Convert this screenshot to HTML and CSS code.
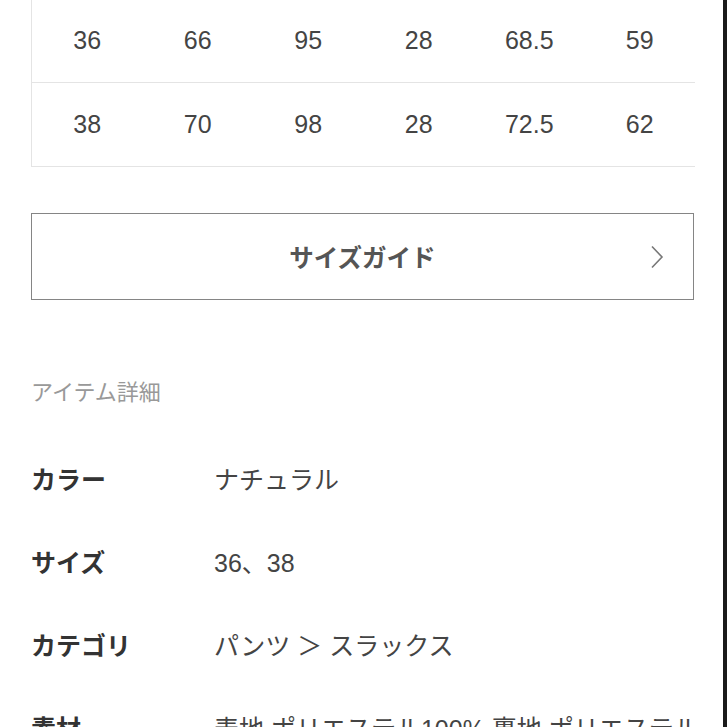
FILE: index.html
```html
<!DOCTYPE html>
<html lang="ja">
<head>
<meta charset="utf-8">
<title>アイテム詳細</title>
<link rel="stylesheet" href="styles.css">
</head>
<body>
<div class="page">
  <div class="content">
    <div class="size-table">
      <div class="size-row">
        <span>36</span><span>66</span><span>95</span><span>28</span><span>68.5</span><span>59</span>
      </div>
      <div class="size-row">
        <span>38</span><span>70</span><span>98</span><span>28</span><span>72.5</span><span>62</span>
      </div>
    </div>

    <a class="guide-btn" href="#">
      <span class="guide-label">サイズガイド</span>
      <svg class="chevron" width="14" height="24" viewBox="0 0 14 24" aria-hidden="true">
        <path d="M2 1.5 L12 12 L2 22.5" fill="none" stroke="#777" stroke-width="1.6"/>
      </svg>
    </a>

    <h2 class="section-title">アイテム詳細</h2>

    <dl class="details">
      <div class="detail-row"><dt>カラー</dt><dd>ナチュラル</dd></div>
      <div class="detail-row"><dt>サイズ</dt><dd>36、38</dd></div>
      <div class="detail-row"><dt>カテゴリ</dt><dd>パンツ ＞ スラックス</dd></div>
      <div class="detail-row"><dt>素材</dt><dd>表地 ポリエステル100% 裏地 ポリエステル100%</dd></div>
    </dl>
  </div>
  <div class="edge"></div>
</div>
</body>
</html>
```

FILE: styles.css
```css
* { box-sizing: border-box; }

html, body {
  margin: 0;
  padding: 0;
  background: #fff;
  overflow: hidden;
}

body {
  font-family: "Liberation Sans", "Noto Sans CJK JP", sans-serif;
  color: #333;
  height: 727px;
}

.page {
  display: flex;
  width: 727px;
  height: 727px;
  overflow: hidden;
}

.content {
  flex: 0 0 723px;
  min-width: 0;
  padding: 0 28px 0 31px;
  overflow: hidden;
}

.edge {
  flex: 0 0 4px;
  background: #1a1a1a;
}

.size-table {
  margin-top: -1px;
  border-left: 1px solid #e4e4e4;
}

.size-row {
  display: grid;
  grid-template-columns: repeat(6, 1fr);
  height: 84px;
  border-bottom: 1px solid #e4e4e4;
  align-items: center;
  font-size: 25px;
  color: #444;
}

.size-row span {
  text-align: center;
}

.guide-btn {
  display: flex;
  align-items: center;
  justify-content: center;
  position: relative;
  margin-top: 46px;
  width: 663px;
  height: 87px;
  border: 1px solid #858585;
  text-decoration: none;
}

.guide-label {
  font-size: 24.5px;
  font-weight: bold;
  color: #555;
}

.chevron {
  position: absolute;
  right: 29px;
  top: 50%;
  margin-top: -12px;
}

.section-title {
  margin: 78px 0 0;
  font-size: 22px;
  line-height: 30px;
  font-weight: normal;
  color: #999;
}

.details {
  margin: 30px 0 0;
}

.detail-row {
  display: flex;
  align-items: center;
  height: 83px;
  font-size: 25px;
  line-height: 30px;
}

.detail-row dt {
  width: 183px;
  flex-shrink: 0;
  font-weight: bold;
  color: #333;
}

.detail-row dd {
  margin: 0;
  padding-right: 20px;
  color: #444;
  white-space: nowrap;
  overflow: hidden;
}
```
